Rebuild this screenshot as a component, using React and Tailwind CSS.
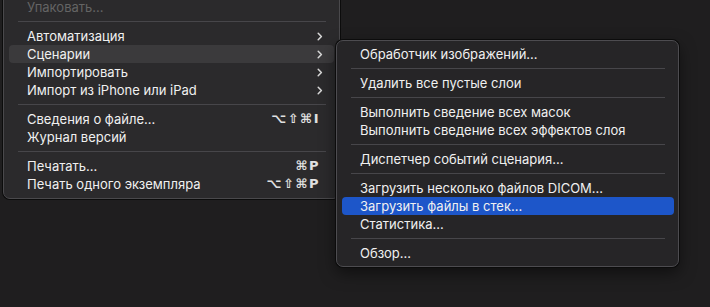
const font = { fontFamily: 'Inter, "Noto Sans", sans-serif' };

function Chevron() {
  return (
    <svg width="6" height="9" viewBox="0 0 6 9" className="text-[#d8d8d8]">
      <path d="M1.2 1.2 L4.4 4.5 L1.2 7.8" fill="none" stroke="currentColor" strokeWidth="1.5" strokeLinecap="round" strokeLinejoin="round" />
    </svg>
  );
}

function Keys({ children }) {
  return (
    <span className="text-[13px] font-bold tracking-[1.5px] text-[#e0e0e0] mr-[3px]" style={{ fontFamily: '"DejaVu Sans", sans-serif' }}>
      {children}
    </span>
  );
}

function Row({ label, right, active, disabled, blue }) {
  return (
    <div
      className={`h-[18px] flex items-center justify-between rounded-[4px] pl-[18px] pr-[11px] ${
        active ? 'bg-[#3b3a3c]' : ''
      } ${blue ? 'bg-[#1d56c9]' : ''}`}
    >
      <span className={`text-[13px] leading-none ${disabled ? 'text-[#646464]' : 'text-[#f0f0f0]'}`}>{label}</span>
      {right}
    </div>
  );
}

function Sep({ ml, mr }) {
  return (
    <div className="h-[11px] flex items-center">
      <div className={`h-px flex-1 bg-[#47464a] ${ml} ${mr}`} />
    </div>
  );
}

export default function App() {
  return (
    <div className="w-[710px] h-[307px] bg-[#1f1e1f] relative overflow-hidden" style={font}>
      {/* File menu */}
      <div className="ml-[3px] mt-[-4px] w-[337px] bg-[#2b2a2c] border border-[#4a494c] rounded-b-[7px] shadow-[0_0_0_1px_#0c0c0c] px-[5px] pt-[1px] pb-[5px]">
        <Row label="Упаковать..." disabled />
        <Sep ml="ml-[9px]" mr="mr-[8px]" />
        <Row label="Автоматизация" right={<Chevron />} />
        <Row label="Сценарии" right={<Chevron />} active />
        <Row label="Импортировать" right={<Chevron />} />
        <Row label="Импорт из iPhone или iPad" right={<Chevron />} />
        <Sep ml="ml-[9px]" mr="mr-[8px]" />
        <Row label="Сведения о файле..." right={<Keys>⌥⇧⌘I</Keys>} />
        <Row label="Журнал версий" />
        <Sep ml="ml-[9px]" mr="mr-[8px]" />
        <Row label="Печатать..." right={<Keys>⌘P</Keys>} />
        <Row label="Печать одного экземпляра" right={<Keys>⌥⇧⌘P</Keys>} />
      </div>

      {/* Scripts submenu */}
      <div className="absolute left-[336px] top-[40px] w-[343px] bg-[#262527] border border-[#4d4c50] rounded-[7px] shadow-[0_0_0_1px_#0c0c0c,0_6px_16px_rgba(0,0,0,0.5)] pl-[5px] pr-[4px] py-[4px]">
        <Row label="Обработчик изображений..." />
        <Sep ml="ml-[9px]" mr="mr-[9px]" />
        <Row label="Удалить все пустые слои" />
        <Sep ml="ml-[9px]" mr="mr-[9px]" />
        <Row label="Выполнить сведение всех масок" />
        <Row label="Выполнить сведение всех эффектов слоя" />
        <Sep ml="ml-[9px]" mr="mr-[9px]" />
        <Row label="Диспетчер событий сценария..." />
        <Sep ml="ml-[9px]" mr="mr-[9px]" />
        <Row label="Загрузить несколько файлов DICOM..." />
        <Row label="Загрузить файлы в стек..." blue />
        <Row label="Статистика..." />
        <Sep ml="ml-[9px]" mr="mr-[9px]" />
        <Row label="Обзор..." />
      </div>
    </div>
  );
}
